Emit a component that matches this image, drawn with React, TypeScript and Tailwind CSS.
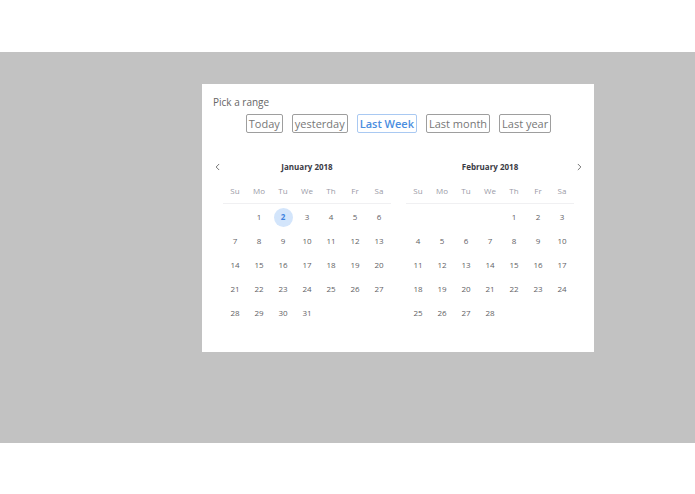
import { ChevronLeft, ChevronRight } from "lucide-react";

const weekDays = ["Su", "Mo", "Tu", "We", "Th", "Fr", "Sa"];
const ranges = ["Today", "yesterday", "Last Week", "Last month", "Last year"];

function buildMonth(offset: number, days: number) {
  const cells: (number | null)[] = [];
  for (let i = 0; i < offset; i++) cells.push(null);
  for (let d = 1; d <= days; d++) cells.push(d);
  while (cells.length % 7 !== 0) cells.push(null);
  return cells;
}

function Month({
  title,
  offset,
  days,
  selected,
}: {
  title: string;
  offset: number;
  days: number;
  selected?: number;
}) {
  const cells = buildMonth(offset, days);
  return (
    <div className="w-[168px]">
      <div className="h-[20px] flex items-center justify-center text-[8px] font-bold text-[#3a3a44]">
        {title}
      </div>
      <div className="grid grid-cols-7 mt-[7px] pb-[5px] border-b border-[#f0f0f2]">
        {weekDays.map((d) => (
          <div
            key={d}
            className="h-[14px] flex items-center justify-center text-[8px] text-[#9a9aa6]"
          >
            {d}
          </div>
        ))}
      </div>
      <div className="grid grid-cols-7 mt-[1px]">
        {cells.map((d, i) => (
          <div key={i} className="h-[24px] flex items-center justify-center">
            {d !== null &&
              (d === selected ? (
                <span className="w-[19px] h-[19px] rounded-full bg-[#d3e5fb] flex items-center justify-center text-[8px] font-bold text-[#3d82e0]">
                  {d}
                </span>
              ) : (
                <span className="text-[8px] text-[#5f5f66]">{d}</span>
              ))}
          </div>
        ))}
      </div>
    </div>
  );
}

export default function App() {
  return (
    <div className="w-[695px] h-[494px] bg-white pt-[52px] font-['Open_Sans',sans-serif]">
      <div className="h-[391px] bg-[#c2c2c2] pt-[32px] pl-[202px]">
        <div className="w-[392px] h-[268px] bg-white px-[11px] pt-[11px]">
          <div className="text-[10px] text-[#666] leading-[14px]">
            Pick a range
          </div>
          <div className="flex justify-center gap-[9px] mt-[5px] pl-[1px]">
            {ranges.map((r) => (
              <button
                key={r}
                className={
                  r === "Last Week"
                    ? "h-[19px] px-[2px] rounded-[2px] border border-[#a9c9f2] text-[11px] font-semibold text-[#4a8de0] leading-none"
                    : "h-[19px] px-[2px] rounded-[2px] border border-[#9e9e9e] text-[11px] text-[#777] leading-none"
                }
              >
                {r}
              </button>
            ))}
          </div>
          <div className="flex mt-[24px]">
            <div className="w-[10px] h-[20px] flex items-center">
              <ChevronLeft size={12} strokeWidth={1.75} className="text-[#555] -ml-[1px]" />
            </div>
            <div className="flex gap-[15px]">
              <Month title="January 2018" offset={1} days={31} selected={2} />
              <Month title="February 2018" offset={4} days={28} />
            </div>
            <div className="w-[10px] h-[20px] flex items-center justify-end">
              <ChevronRight size={12} strokeWidth={1.75} className="text-[#555] -mr-[1px]" />
            </div>
          </div>
        </div>
      </div>
    </div>
  );
}
